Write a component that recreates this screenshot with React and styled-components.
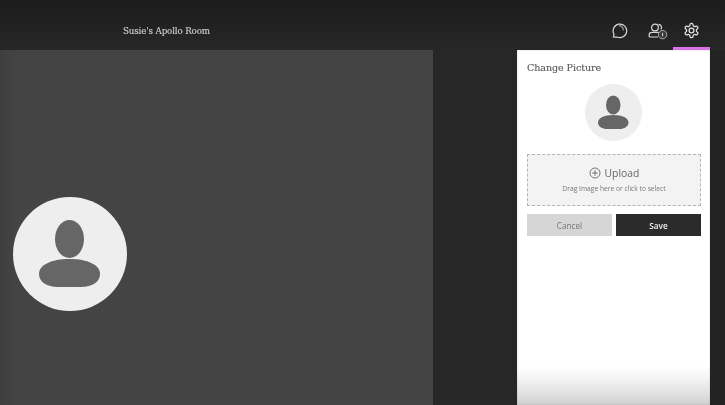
import React from "react";
import styled, { createGlobalStyle } from "styled-components";

const GlobalStyle = createGlobalStyle`
  html, body { margin: 0; padding: 0; background: #262626; }
  body { font-family: "Open Sans", "Liberation Sans", sans-serif; }
`;

const Page = styled.div`
  width: 725px;
  height: 405px;
  overflow: hidden;
  display: flex;
  flex-direction: column;
  background: #272727;
  filter: blur(0.45px);
`;

const Header = styled.header`
  height: 50px;
  flex: none;
  display: flex;
  align-items: center;
  background: linear-gradient(#1c1c1c, #272727);
`;

const RoomName = styled.div`
  margin-left: 123px;
  margin-top: 11px;
  width: 386px;
  font-family: "DejaVu Serif", serif;
  font-size: 8.7px;
  letter-spacing: -0.13px;
  color: #cfcfcf;
  -webkit-text-stroke: 0.15px #cfcfcf;
`;

const HeaderTabs = styled.nav`
  margin-left: 93px;
  display: flex;
  align-items: flex-start;
  height: 50px;
`;

const Tab = styled.div`
  width: ${(p) => p.$width}px;
  height: 50px;
  box-sizing: border-box;
  padding-top: 22px;
  padding-left: ${(p) => p.$shift || 0}px;
  display: flex;
  justify-content: center;
  border-bottom: 3px solid ${(p) => (p.$active ? "#dc72e8" : "transparent")};
  svg { display: block; }
`;

const Body = styled.div`
  flex: 1;
  display: flex;
  min-height: 0;
`;

const Stage = styled.main`
  width: 433px;
  flex: none;
  display: flex;
  align-items: flex-start;
  padding-left: 13px;
  padding-top: 147px;
  box-sizing: border-box;
  background: linear-gradient(90deg, #3f3f3f, #444 18px, #444 100%);
`;

const Avatar = styled.div`
  width: ${(p) => p.$size}px;
  height: ${(p) => p.$size}px;
  border-radius: 50%;
  background: #eeeeee;
  display: flex;
  align-items: center;
  justify-content: center;
  flex: none;
`;

const Gap = styled.div`
  width: 84px;
  flex: none;
  background: #272727;
`;

const Panel = styled.aside`
  width: 193px;
  flex: none;
  box-sizing: border-box;
  padding: 11px 9px 0 10px;
  display: flex;
  flex-direction: column;
  background: linear-gradient(#fff 0, #fff 316px, #f4f4f4 328px, #e2e2e2 343px, #d0d0d0 100%);
  box-shadow: inset 0 0 2px rgba(0, 0, 0, 0.2);
`;

const PanelTitle = styled.h2`
  margin: 0;
  font-family: "DejaVu Serif", serif;
  font-weight: 400;
  font-size: 9.6px;
  line-height: 14px;
  letter-spacing: -0.1px;
  color: #5c5c5c;
  -webkit-text-stroke: 0.15px #5c5c5c;
`;

const AvatarRow = styled.div`
  display: flex;
  justify-content: center;
  margin-top: 9px;
  padding-right: 1px;
`;

const DropZone = styled.div`
  margin-top: 13px;
  height: 52px;
  box-sizing: border-box;
  border: 1px dashed #b4b4b4;
  background: #f3f3f3;
  display: flex;
  flex-direction: column;
  align-items: center;
  padding-top: 11px;
`;

const UploadLine = styled.div`
  display: flex;
  align-items: center;
  gap: 4px;
  font-size: 10.4px;
  line-height: 14px;
  color: #666;
`;

const Hint = styled.div`
  margin-top: 4px;
  font-size: 6.7px;
  line-height: 9px;
  color: #777;
`;

const Actions = styled.div`
  margin-top: 8px;
  display: grid;
  grid-template-columns: 85px 85px;
  justify-content: space-between;
`;

const Button = styled.button`
  height: 22px;
  padding: 0;
  border: 0;
  font-family: inherit;
  font-size: 8.2px;
  font-weight: ${(p) => (p.$primary ? 600 : 400)};
  color: ${(p) => (p.$primary ? "#f2f2f2" : "#777")};
  background: ${(p) => (p.$primary ? "#2b2b2b" : "#d6d6d6")};
`;

const RightEdge = styled.div`
  flex: 1;
  background: #232323;
`;

const PersonIcon = ({ size }) => (
  <svg width={size} height={size} viewBox="0 0 114 114" fill="#666">
    <ellipse cx="56.5" cy="42" rx="14.5" ry="19" />
    <path d="M56.5 62 C75 62 87 68 87 77 C87 85 79 90 68 90 H45 C34 90 26 85 26 77 C26 68 38 62 56.5 62 Z" />
  </svg>
);

const ChatIcon = () => (
  <svg width="17" height="17" viewBox="2 0 17 17" fill="none" stroke="#d8d8d8" strokeWidth="1.2">
    <path d="M3.4 14.8 L4 12.2 A6.8 6.8 0 1 1 7 15 Q5 15.2 3.4 14.8 Z" />
    <path d="M9 3.6 A5 5 0 0 1 13.4 8.4" stroke="#999" />
  </svg>
);

const PeopleIcon = () => (
  <svg width="20" height="18" viewBox="0 0 20 18" fill="none" stroke="#d8d8d8" strokeWidth="1.2">
    <circle cx="7" cy="5.5" r="3.4" />
    <path d="M1.2 15 V12.6 Q1.2 10.4 4 10.4 H10 Q11 10.4 11.6 11 M1.2 15 H10" />
    <path d="M10.6 2.4 A3.2 3.2 0 0 1 13 7.4" />
    <circle cx="14.6" cy="12.6" r="4.2" fill="#3a3a3a" stroke="#aaa" strokeWidth="1" />
    <path d="M14.6 10.8 V14.4" stroke="#e6e6e6" strokeWidth="0.9" />
  </svg>
);

const GearIcon = () => (
  <svg width="17" height="17" viewBox="0 0 24 24" fill="none" stroke="#e4e4e4" strokeWidth="1.8" strokeLinejoin="round">
    <path d="M12.22 2h-.44a2 2 0 0 0-2 2v.18a2 2 0 0 1-1 1.73l-.43.25a2 2 0 0 1-2 0l-.15-.08a2 2 0 0 0-2.73.73l-.22.38a2 2 0 0 0 .73 2.73l.15.1a2 2 0 0 1 1 1.72v.51a2 2 0 0 1-1 1.74l-.15.09a2 2 0 0 0-.73 2.73l.22.38a2 2 0 0 0 2.73.73l.15-.08a2 2 0 0 1 2 0l.43.25a2 2 0 0 1 1 1.73V20a2 2 0 0 0 2 2h.44a2 2 0 0 0 2-2v-.18a2 2 0 0 1 1-1.73l.43-.25a2 2 0 0 1 2 0l.15.08a2 2 0 0 0 2.73-.73l.22-.39a2 2 0 0 0-.73-2.73l-.15-.08a2 2 0 0 1-1-1.74v-.5a2 2 0 0 1 1-1.74l.15-.09a2 2 0 0 0 .73-2.73l-.22-.38a2 2 0 0 0-2.73-.73l-.15.08a2 2 0 0 1-2 0l-.43-.25a2 2 0 0 1-1-1.73V4a2 2 0 0 0-2-2z" />
    <circle cx="12" cy="12" r="3.4" />
  </svg>
);

const PlusCircle = () => (
  <svg width="12" height="12" viewBox="0 0 12 12" fill="none" stroke="#666" strokeWidth="0.9">
    <circle cx="6" cy="6" r="5" />
    <path d="M6 3.2 V8.8 M3.2 6 H8.8" />
  </svg>
);

export default function App() {
  return (
    <>
      <GlobalStyle />
      <Page>
        <Header>
          <RoomName>Susie's Apollo Room</RoomName>
          <HeaderTabs>
            <Tab $width={36}><ChatIcon /></Tab>
            <Tab $width={35} $shift={4}><PeopleIcon /></Tab>
            <Tab $width={37} $active><GearIcon /></Tab>
          </HeaderTabs>
        </Header>
        <Body>
          <Stage>
            <Avatar $size={114}><PersonIcon size={114} /></Avatar>
          </Stage>
          <Gap />
          <Panel>
            <PanelTitle>Change Picture</PanelTitle>
            <AvatarRow>
              <Avatar $size={57}><PersonIcon size={57} /></Avatar>
            </AvatarRow>
            <DropZone>
              <UploadLine><PlusCircle />Upload</UploadLine>
              <Hint>Drag Image here or click to select</Hint>
            </DropZone>
            <Actions>
              <Button>Cancel</Button>
              <Button $primary>Save</Button>
            </Actions>
          </Panel>
          <RightEdge />
        </Body>
      </Page>
    </>
  );
}
